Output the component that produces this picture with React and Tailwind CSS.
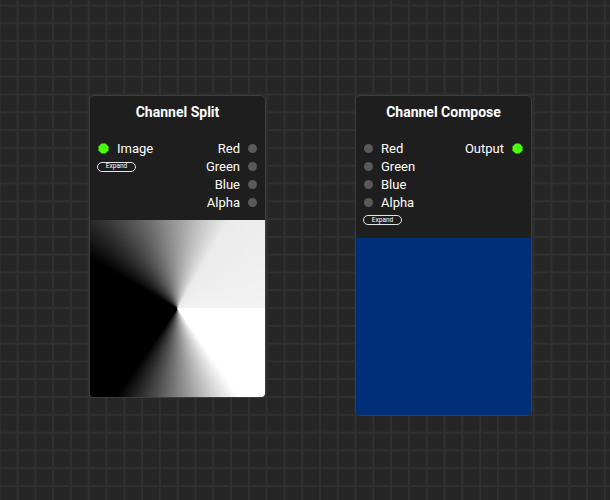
const font = { fontFamily: 'Roboto, "Noto Sans", sans-serif' }

function Socket({ live }) {
  if (live) {
    return (
      <svg width="11" height="11" viewBox="0 0 11 11" className="shrink-0">
        <polygon points="3.5,0.5 7.5,0.5 10.5,3.5 10.5,7.5 7.5,10.5 3.5,10.5 0.5,7.5 0.5,3.5" fill="#46ff0a" />
      </svg>
    )
  }
  return <div className="w-[9px] h-[9px] rounded-full bg-[#595959] shrink-0" />
}

function ExpandPill() {
  return (
    <div className="w-[39px] h-[10px] rounded-full border border-[#e6e6e6] flex items-center justify-center text-[6.5px] leading-none text-white">
      Expand
    </div>
  )
}

function InRow({ label, live }) {
  return (
    <div className="h-[17.8px] flex items-center gap-[8px] pl-[8px]">
      <Socket live={live} />
      <span>{label}</span>
    </div>
  )
}

function OutRow({ label, live }) {
  return (
    <div className="h-[17.8px] flex items-center justify-end gap-[8px] pr-[8px]">
      <span>{label}</span>
      <Socket live={live} />
    </div>
  )
}

function Node({ title, left, top, children, preview }) {
  return (
    <div
      className="absolute w-[177px] rounded-[5px] border border-[#3d3d3d] bg-[#1e1e1e] overflow-hidden text-white text-[13px]"
      style={{ left, top }}
    >
      <div className="h-[32px] flex items-center justify-center text-[14px] font-bold">{title}</div>
      {children}
      {preview}
    </div>
  )
}

export default function App() {
  return (
    <div
      className="relative w-[610px] h-[500px] overflow-hidden bg-[#262626] bg-[linear-gradient(to_right,#303030_2px,transparent_2px),linear-gradient(to_bottom,#303030_2px,transparent_2px)] bg-[size:17.8px_17.8px] bg-[position:16.5px_4.5px]"
      style={font}
    >
      <Node
        title="Channel Split"
        left={89}
        top={95}
        preview={
          <div className="h-[177px] bg-[conic-gradient(from_90deg_at_50%_50%,#ffffff_0deg,#ffffff_55deg,#000000_125deg,#000000_210deg,#ebebeb_300deg,#f3f3f3_360deg)]" />
        }
      >
        <div className="flex pt-[12px] pb-[9px]">
          <div className="flex-1">
            <InRow label="Image" live />
            <div className="pl-[7px] h-[17.8px] flex items-center">
              <ExpandPill />
            </div>
          </div>
          <div className="flex-1">
            <OutRow label="Red" />
            <OutRow label="Green" />
            <OutRow label="Blue" />
            <OutRow label="Alpha" />
          </div>
        </div>
      </Node>

      <Node
        title="Channel Compose"
        left={355}
        top={95}
        preview={<div className="h-[177px] bg-[#002f79]" />}
      >
        <div className="flex pt-[12px] pb-[9px]">
          <div className="flex-1">
            <InRow label="Red" />
            <InRow label="Green" />
            <InRow label="Blue" />
            <InRow label="Alpha" />
            <div className="pl-[7px] h-[17.8px] flex items-center">
              <ExpandPill />
            </div>
          </div>
          <div className="flex-1">
            <OutRow label="Output" live />
          </div>
        </div>
      </Node>
    </div>
  )
}
